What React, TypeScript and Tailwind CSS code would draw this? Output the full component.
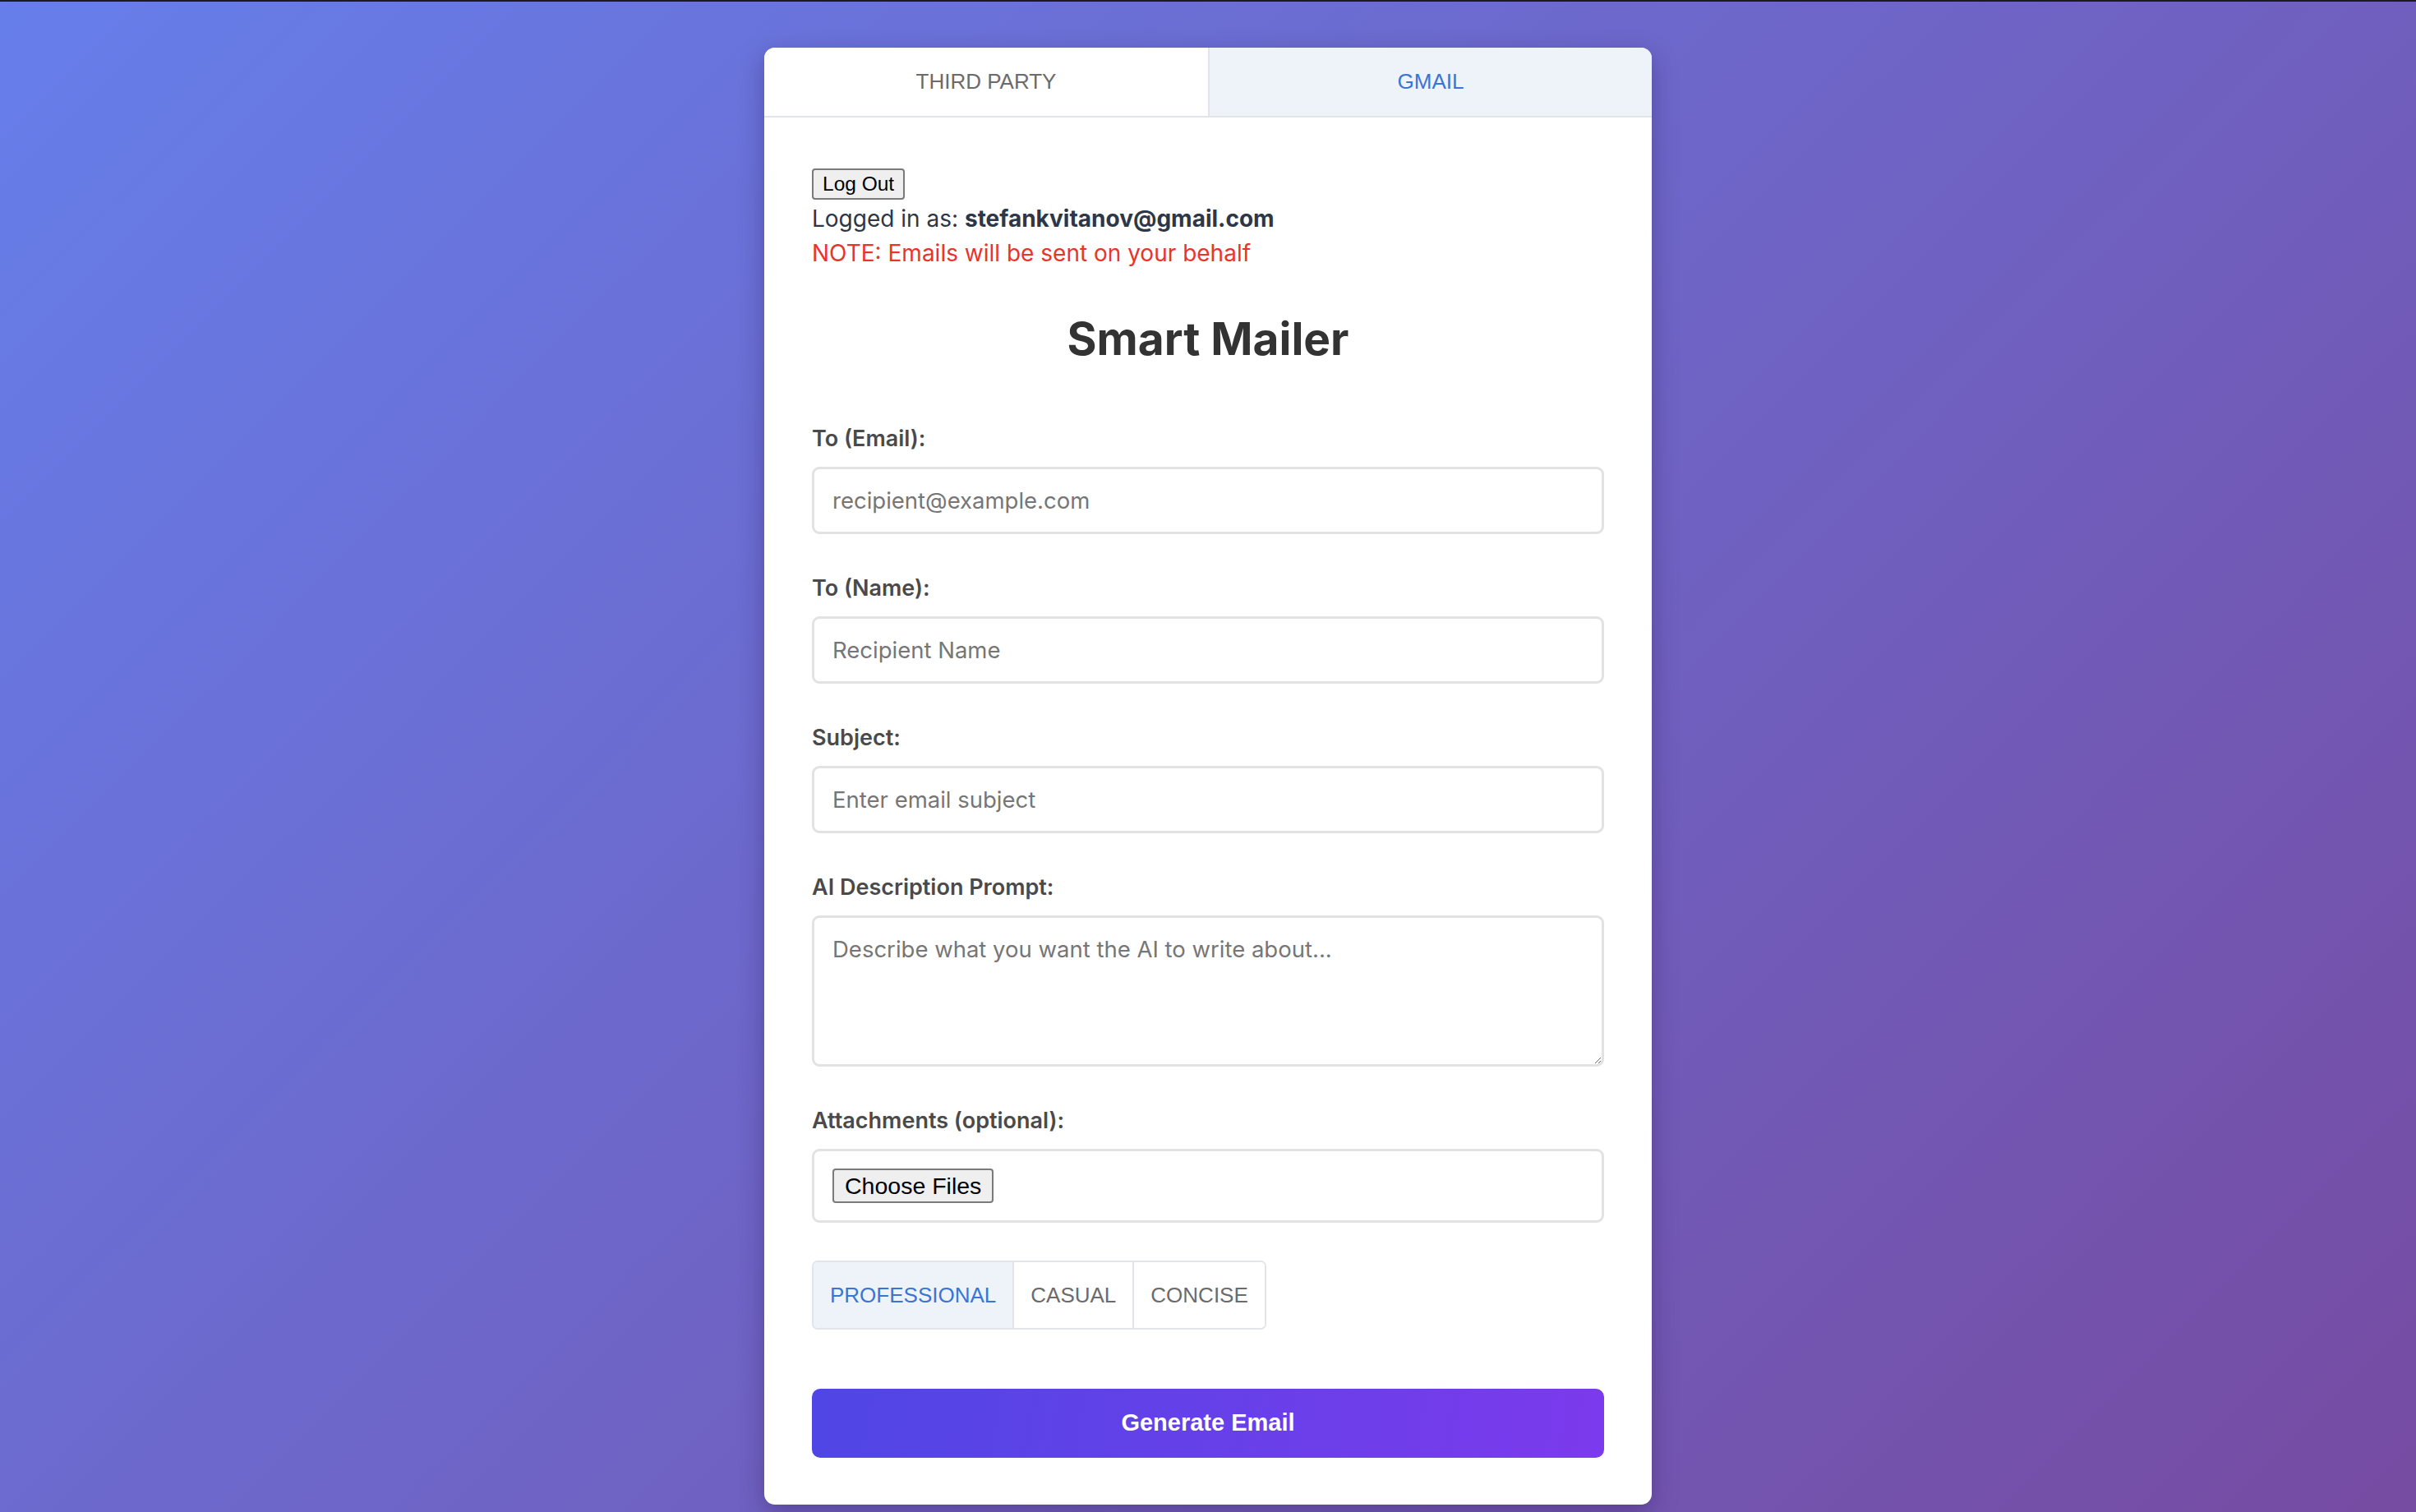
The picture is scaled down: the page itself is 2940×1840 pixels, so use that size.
import React, { useState } from "react";

const inter = "font-['Inter','Noto_Sans',sans-serif]";
const arial = "font-['Liberation_Sans',Arial,sans-serif]";

type FieldProps = {
  label: string;
  children: React.ReactNode;
};

function Field({ label, children }: FieldProps) {
  return (
    <div className="mb-[48px]">
      <label className={`block text-[27px] leading-[36px] font-semibold text-[#4a4a4a] ${inter}`}>
        {label}
      </label>
      <div className="mt-[16px]">{children}</div>
    </div>
  );
}

const inputClass =
  "block w-full h-[82px] rounded-[9px] border-[3px] border-[#e2e2e2] bg-white px-[22px] text-[27.5px] text-[#333] outline-none placeholder:text-[#767676] " +
  inter;

export default function App() {
  const [tab, setTab] = useState("gmail");
  const [tone, setTone] = useState("professional");

  const tones = [
    { id: "professional", label: "PROFESSIONAL" },
    { id: "casual", label: "CASUAL" },
    { id: "concise", label: "CONCISE" },
  ];

  return (
    <div className="h-[1840px] w-full overflow-hidden border-t-2 border-[#1c1c1c] bg-[linear-gradient(135deg,#667eea_0%,#764ba2_100%)]">
      <div className="mx-auto mt-[56px] w-[1080px] overflow-hidden rounded-[13px] bg-white shadow-[0_10px_30px_rgba(40,20,80,0.35)]">
        {/* Tabs */}
        <div className="grid h-[85px] grid-cols-2 border-b-2 border-[#e1e4e8]">
          <button
            onClick={() => setTab("third")}
            className={`text-[26px] ${arial} ${
              tab === "third" ? "bg-[#eef3fa] text-[#3a75d3]" : "bg-white text-[#6b6b6b]"
            }`}
          >
            THIRD PARTY
          </button>
          <button
            onClick={() => setTab("gmail")}
            className={`border-l-2 border-[#e1e4e8] text-[26px] ${arial} ${
              tab === "gmail" ? "bg-[#eef3fa] text-[#3a75d3]" : "bg-white text-[#6b6b6b]"
            }`}
          >
            GMAIL
          </button>
        </div>

        {/* Body */}
        <div className="px-[58px] pt-[62px] pb-[57px]">
          <button
            className={`block h-[38px] rounded-[4px] border-2 border-[#7a7a7a] bg-[#efefef] px-[11px] text-[24.5px] leading-none text-black ${arial}`}
          >
            Log Out
          </button>
          <div className={`mt-[2px] text-[28px] leading-[42px] text-[#2d3748] ${inter}`}>
            Logged in as: <span className="font-bold">stefankvitanov@gmail.com</span>
          </div>
          <div className={`text-[28px] leading-[42px] text-[#e8352b] ${inter}`}>
            NOTE: Emails will be sent on your behalf
          </div>

          <h1 className={`mt-[50px] mb-[70px] text-center text-[55px] leading-[67px] font-bold text-[#333] ${inter}`}>
            Smart Mailer
          </h1>

          <Field label="To (Email):">
            <input className={inputClass} placeholder="recipient@example.com" />
          </Field>
          <Field label="To (Name):">
            <input className={inputClass} placeholder="Recipient Name" />
          </Field>
          <Field label="Subject:">
            <input className={inputClass} placeholder="Enter email subject" />
          </Field>
          <Field label="AI Description Prompt:">
            <textarea
              className={`block h-[184px] w-full rounded-[9px] border-[3px] border-[#e2e2e2] bg-white px-[22px] py-[18px] text-[27.5px] leading-[40px] text-[#333] outline-none placeholder:text-[#767676] ${inter}`}
              placeholder="Describe what you want the AI to write about..."
            />
          </Field>
          <div className="mb-[46px]">
            <label className={`block text-[27px] leading-[36px] font-semibold text-[#4a4a4a] ${inter}`}>
              Attachments (optional):
            </label>
            <div className="mt-[16px] flex h-[90px] items-center rounded-[9px] border-[3px] border-[#e2e2e2] px-[22px]">
              <button
                className={`h-[42px] rounded-[4px] border-2 border-[#7a7a7a] bg-[#efefef] px-[13px] text-[28.5px] leading-none text-black ${arial}`}
              >
                Choose Files
              </button>
            </div>
          </div>

          {/* Tone selector */}
          <div className="flex">
            <div className="flex h-[84px] overflow-hidden rounded-[7px] border-2 border-[#e1e4e8]">
              {tones.map((t, i) => (
                <button
                  key={t.id}
                  onClick={() => setTone(t.id)}
                  className={`px-[20px] text-[26px] ${arial} ${i > 0 ? "border-l-2 border-[#e1e4e8]" : ""} ${
                    tone === t.id ? "bg-[#eef3fa] text-[#3a75d3]" : "bg-white text-[#6b6b6b]"
                  }`}
                >
                  {t.label}
                </button>
              ))}
            </div>
          </div>

          <button
            className={`mt-[72px] block h-[84px] w-full rounded-[10px] bg-[linear-gradient(100deg,#4f46e5_0%,#7c3aed_100%)] text-[29px] font-bold text-white ${arial}`}
          >
            Generate Email
          </button>
        </div>
      </div>
    </div>
  );
}
